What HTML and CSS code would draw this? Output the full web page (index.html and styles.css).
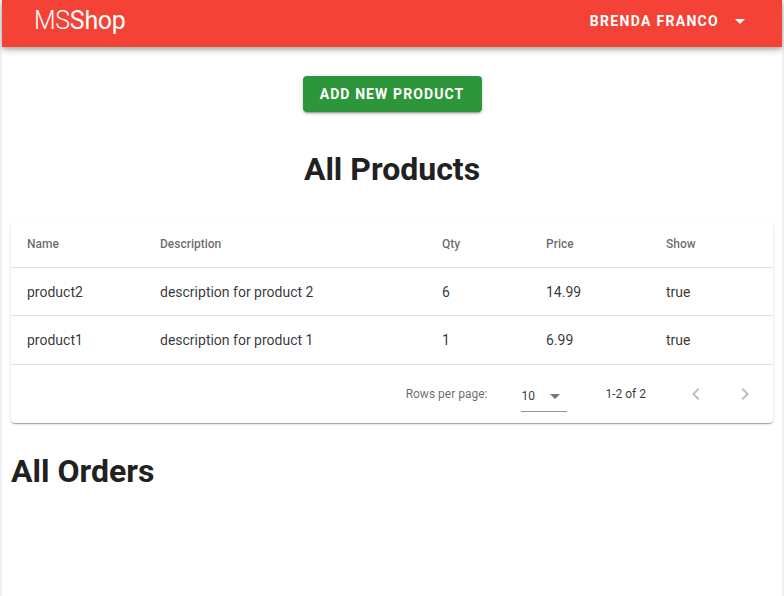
FILE: index.html
```html
<!DOCTYPE html>
<html>
<head>
<meta charset="utf-8">
<link rel="stylesheet" href="styles.css">
</head>
<body>
<div class="page">
  <header class="appbar">
    <div class="logo"><span class="ms">MS</span><span class="shop">Shop</span></div>
    <button class="user">BRENDA FRANCO
      <svg class="caret" width="24" height="24" viewBox="0 0 24 24"><path d="M7 10l5 5 5-5z" fill="#fff"/></svg>
    </button>
  </header>
  <main class="content">
    <div class="actions"><button class="add">ADD NEW PRODUCT</button></div>
    <h1 class="title">All Products</h1>
    <div class="card">
      <table class="tbl">
        <thead>
          <tr><th class="c1">Name</th><th class="c2">Description</th><th class="c3">Qty</th><th class="c4">Price</th><th class="c5">Show</th></tr>
        </thead>
        <tbody>
          <tr><td>product2</td><td>description for product 2</td><td>6</td><td>14.99</td><td>true</td></tr>
          <tr class="r2"><td>product1</td><td>description for product 1</td><td>1</td><td>6.99</td><td>true</td></tr>
        </tbody>
      </table>
      <div class="pager">
        <span class="rpp">Rows per page:</span>
        <div class="select"><span>10</span>
          <svg width="24" height="24" viewBox="0 0 24 24"><path d="M7 10l5 5 5-5z" fill="rgba(0,0,0,0.54)"/></svg>
        </div>
        <span class="range">1-2 of 2</span>
        <div class="navs">
          <svg width="24" height="24" viewBox="0 0 24 24"><path d="M15.41 7.41L14 6l-6 6 6 6 1.41-1.41L10.83 12z" fill="rgba(0,0,0,0.26)"/></svg>
          <svg width="24" height="24" viewBox="0 0 24 24"><path d="M10 6L8.59 7.41 13.17 12l-4.58 4.59L10 18l6-6z" fill="rgba(0,0,0,0.26)"/></svg>
        </div>
      </div>
    </div>
    <h2 class="title2">All Orders</h2>
  </main>
</div>
</body>
</html>
```

FILE: styles.css
```css
html, body {
  margin: 0;
  padding: 0;
  background: #eef2f8;
  font-family: Roboto, "Liberation Sans", sans-serif;
}
.page {
  margin: 0 2px;
  background: #fff;
  min-height: 596px;
}
.appbar {
  background: #f44336;
  display: flex;
  align-items: center;
  justify-content: space-between;
  padding: 0 22px 6px 32px;
  box-shadow: 0 2px 4px -1px rgba(0,0,0,0.2), 0 4px 5px 0 rgba(0,0,0,0.14), 0 1px 10px 0 rgba(0,0,0,0.12);
  position: relative;
  z-index: 1;
  box-sizing: content-box;
  height: 41px;
}
.logo {
  color: #fff;
  font-size: 25px;
  letter-spacing: -0.3px;
}
.ms { font-weight: 300; }
.shop { font-weight: 400; }
.user {
  background: none;
  border: 0;
  color: #fff;
  font-family: Roboto, "Liberation Sans", sans-serif;
  font-weight: 700;
  font-size: 14px;
  letter-spacing: 1.3px;
  display: flex;
  align-items: center;
  gap: 9px;
  padding: 0 8px;
}
.content {
  padding: 0 9px;
}
.actions {
  display: flex;
  justify-content: center;
  padding-top: 29px;
}
.add {
  background: #2e963a;
  color: #fff;
  border: 0;
  border-radius: 4px;
  height: 36px;
  width: 179px;
  font-family: Roboto, "Liberation Sans", sans-serif;
  font-weight: 700;
  font-size: 14px;
  letter-spacing: 1.1px;
  box-shadow: 0 3px 1px -2px rgba(0,0,0,0.2), 0 2px 2px 0 rgba(0,0,0,0.14), 0 1px 5px 0 rgba(0,0,0,0.12);
}
.title {
  text-align: center;
  font-size: 32px;
  font-weight: 700;
  color: #212121;
  margin: 37px 0 0;
  line-height: 40px;
}
.card {
  margin-top: 31px;
  border-radius: 4px;
  background: #fff;
  box-shadow: 0 2px 1px -1px rgba(0,0,0,0.2), 0 1px 1px 0 rgba(0,0,0,0.14), 0 1px 3px 0 rgba(0,0,0,0.12);
}
.tbl {
  width: 100%;
  border-collapse: collapse;
}
.tbl th, .tbl td {
  text-align: left;
  border-bottom: 1px solid #e0e0e0;
  padding: 0 16px;
}
.tbl th {
  font-size: 12px;
  font-weight: 500;
  color: rgba(0,0,0,0.6);
  height: 47px;
}
.tbl td {
  font-size: 14px;
  color: rgba(0,0,0,0.8);
  height: 47px;
}
.tbl .r2 td { height: 48px; }
.c1 { width: 101px; }
.c2 { width: 250px; }
.c3 { width: 72px; }
.c4 { width: 88px; }
.pager {
  height: 58px;
  display: flex;
  align-items: center;
  justify-content: flex-end;
  padding-right: 16px;
  font-size: 12px;
  color: rgba(0,0,0,0.6);
}
.rpp { margin-right: 34px; }
.select {
  display: flex;
  align-items: center;
  gap: 10px;
  width: 46px;
  height: 32px;
  border-bottom: 1px solid rgba(0,0,0,0.42);
  box-sizing: border-box;
  margin-top: 4px;
  font-size: 12px;
  color: rgba(0,0,0,0.8);
}
.select svg { margin-left: -2px; }
.range { margin-left: 38px; color: rgba(0,0,0,0.8); }
.navs {
  display: flex;
  gap: 25px;
  margin-left: 38px;
}
.title2 {
  font-size: 32px;
  font-weight: 700;
  color: #212121;
  margin: 29px 0 0;
  line-height: 38px;
}
```
